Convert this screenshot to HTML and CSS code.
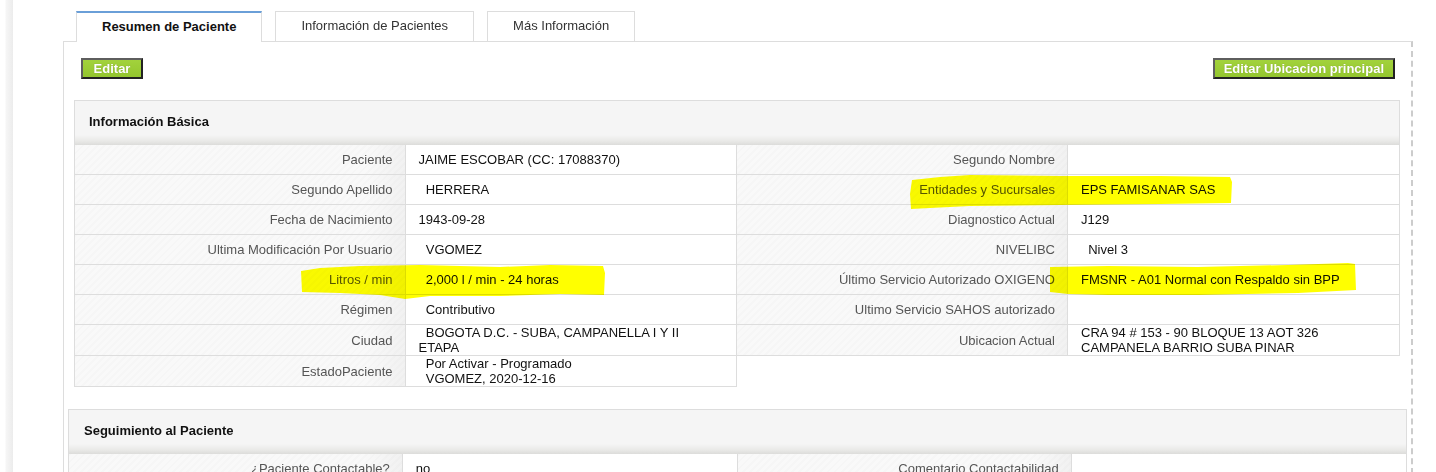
FILE: index.html
```html
<!DOCTYPE html>
<html lang="es">
<head>
  <meta charset="UTF-8" />
  <title>Resumen de Paciente</title>
  <link rel="stylesheet" href="styles.css">
</head>
<body>
  <div class="page">
    <div class="gutter"></div>

    <div class="content">
      <div class="tabs">
        <div class="tab active">Resumen de Paciente</div>
        <div class="tab">Información de Pacientes</div>
        <div class="tab">Más Información</div>
      </div>

      <div class="panel">
        <div class="toolbar">
          <button class="btn btn-edit">Editar</button>
          <button class="btn">Editar Ubicacion principal</button>
        </div>

        <!-- Información básica -->
        <div class="section basic">
          <div class="section-head">Información Básica</div>
          <div class="section-body">
            <div class="info-table">
              <div class="row"><div class="label">Paciente</div><div class="value">JAIME ESCOBAR (CC: 17088370)</div></div>
              <div class="row"><div class="label">Segundo Apellido</div><div class="value">&nbsp; HERRERA</div></div>
              <div class="row"><div class="label">Fecha de Nacimiento</div><div class="value">1943-09-28</div></div>
              <div class="row"><div class="label">Ultima Modificación Por Usuario</div><div class="value">&nbsp; VGOMEZ</div></div>
              <div class="row"><div class="label">Litros / min</div><div class="value">&nbsp; 2,000 l / min - 24 horas</div></div>
              <div class="row"><div class="label">Régimen</div><div class="value">&nbsp; Contributivo</div></div>
              <div class="row"><div class="label">Ciudad</div><div class="value"><span>&nbsp; BOGOTA D.C. - SUBA, CAMPANELLA I Y II ETAPA</span></div></div>
              <div class="row"><div class="label">EstadoPaciente</div><div class="value"><span>&nbsp; Por Activar - Programado<br>&nbsp; VGOMEZ, 2020-12-16</span></div></div>
            </div>
            <div class="info-table">
              <div class="row"><div class="label">Segundo Nombre</div><div class="value"></div></div>
              <div class="row"><div class="label">Entidades y Sucursales</div><div class="value">EPS FAMISANAR SAS</div></div>
              <div class="row"><div class="label">Diagnostico Actual</div><div class="value">J129</div></div>
              <div class="row"><div class="label">NIVELIBC</div><div class="value">&nbsp; Nivel 3</div></div>
              <div class="row"><div class="label">Último Servicio Autorizado OXIGENO</div><div class="value">FMSNR - A01 Normal con Respaldo sin BPP</div></div>
              <div class="row"><div class="label">Ultimo Servicio SAHOS autorizado</div><div class="value"></div></div>
              <div class="row"><div class="label">Ubicacion Actual</div><div class="value"><span>CRA 94 # 153 - 90 BLOQUE 13 AOT 326 CAMPANELA BARRIO SUBA PINAR</span></div></div>
            </div>
          </div>
        </div>

        <!-- Seguimiento -->
        <div class="section follow">
          <div class="section-head">Seguimiento al Paciente</div>
          <div class="section-body">
            <div class="info-table">
              <div class="row"><div class="label">¿Paciente Contactable?</div><div class="value">no</div></div>
            </div>
            <div class="info-table">
              <div class="row"><div class="label">Comentario Contactabilidad</div><div class="value"></div></div>
            </div>
          </div>
        </div>

        <!-- marcas de resaltador -->
        <div class="marker m1"></div>
        <div class="marker m2"></div>
        <div class="marker m3"></div>
      </div>
    </div>
  </div>
</body>
</html>
```

FILE: styles.css
```css
/* Reset básico */
* {
  box-sizing: border-box;
  margin: 0; padding: 0;
}

body {
  background: #fff;
  color: #222;
  font-family: "Liberation Sans", Arial, sans-serif;
  font-size: 13px;
  overflow: hidden;
}

.page {
  display: flex;
  min-height: 100vh;
}

/* Franja izquierda */
.gutter {
  width: 13px;
  flex-shrink: 0;
  background: linear-gradient(to right, #fff 0, #fff 5px, #f6f6f6 6px, #ececec 13px);
}

.content {
  flex-grow: 1;
  padding: 11px 23px 0 50px;
}

/* Pestañas */
.tabs {
  display: flex;
  align-items: flex-end;
  gap: 13px;
  padding-left: 13px;
}

.tab {
  height: 30px;
  padding: 0 25px;
  border: 1px solid #ddd;
  border-bottom: none;
  background: #fff;
  color: #333;
  line-height: 28px;
  white-space: nowrap;
}

.tab.active {
  height: 31px;
  margin-bottom: -1px;
  border-top: 2px solid #6a9fd8;
  color: #111;
  font-weight: bold;
  line-height: 28px;
  position: relative;
  z-index: 1;
}

/* Panel */
.panel {
  position: relative;
  border-top: 1px solid #ddd;
  border-left: 1px solid #ddd;
  border-right: 2px dashed #ccc;
  min-height: 440px;
}

.toolbar {
  display: flex;
  justify-content: space-between;
  padding: 16px 16px 0 17px;
}

.btn {
  height: 21px;
  padding: 0 9px;
  border: 2px solid;
  border-color: #5e5e5e #222 #222 #5e5e5e;
  background: linear-gradient(#a2d23c, #94c62e);
  color: #fff;
  font-family: inherit;
  font-size: 13px;
  font-weight: bold;
  line-height: 17px;
  text-shadow: 0 0 1px #7a9a2a;
  cursor: pointer;
}

.btn-edit {
  min-width: 62px;
}

/* Secciones */
.section.basic {
  margin: 21px 11px 0 10px;
}

.section.follow {
  margin: 22px 4px 0 4px;
}

.section-head {
  height: 45px;
  padding: 0 0 3px 14px;
  border: 1px solid #ddd;
  border-bottom: none;
  background: linear-gradient(to bottom, #f5f5f5 0, #f5f5f5 34px, #e9e9e7 40px, #dcdcda 44px, #fff 44px);
  color: #111;
  font-weight: bold;
  display: flex;
  align-items: center;
}

.follow .section-head {
  padding-left: 15px;
}

.section-body {
  display: grid;
  grid-template-columns: 1fr 1fr;
  align-items: start;
}

.info-table {
  border-left: 1px solid #ddd;
  border-right: 1px solid #ddd;
}

.info-table + .info-table {
  border-left: none;
}

.row {
  display: grid;
  grid-template-columns: 1fr 1fr;
  border-bottom: 1px solid #ddd;
}

.label {
  min-height: 29px;
  padding: 0 12px;
  border-right: 1px solid #ddd;
  background:
    linear-gradient(to right, rgba(0,0,0,0) 88%, rgba(0,0,0,0.03) 100%),
    repeating-linear-gradient(135deg, #f6f6f6 0, #f6f6f6 2px, #f9f9f9 2px, #f9f9f9 5px);
  color: #555;
  text-align: right;
  display: flex;
  align-items: center;
  justify-content: flex-end;
  line-height: 15px;
}

.value {
  min-height: 29px;
  padding: 0 13px;
  color: #111;
  display: flex;
  align-items: center;
  line-height: 15px;
}

/* Marcas amarillas */
.marker {
  position: absolute;
  background: #ffff00;
  mix-blend-mode: multiply;
  pointer-events: none;
}

.m1 {
  left: 236px; top: 221px;
  width: 305px; height: 37px;
  clip-path: polygon(1px 8px, 20px 5px, 60px 3px, 120px 2px, 200px 4px, 250px 2px, 303px 3px, 305px 10px, 304px 32px, 260px 31px, 200px 33px, 130px 33px, 105px 36px, 80px 32px, 40px 30px, 2px 29px);
}

.m2 {
  left: 846px; top: 132px;
  width: 322px; height: 36px;
  clip-path: polygon(2px 6px, 30px 3px, 60px 1px, 150px 2px, 250px 2px, 320px 3px, 322px 8px, 321px 29px, 250px 30px, 150px 31px, 60px 32px, 20px 34px, 1px 35px, 0 20px);
}

.m3 {
  left: 984px; top: 220px;
  width: 308px; height: 36px;
  clip-path: polygon(2px 5px, 60px 4px, 150px 5px, 240px 3px, 300px 1px, 307px 2px, 308px 28px, 250px 31px, 150px 33px, 60px 33px, 20px 32px, 2px 30px);
}
```
